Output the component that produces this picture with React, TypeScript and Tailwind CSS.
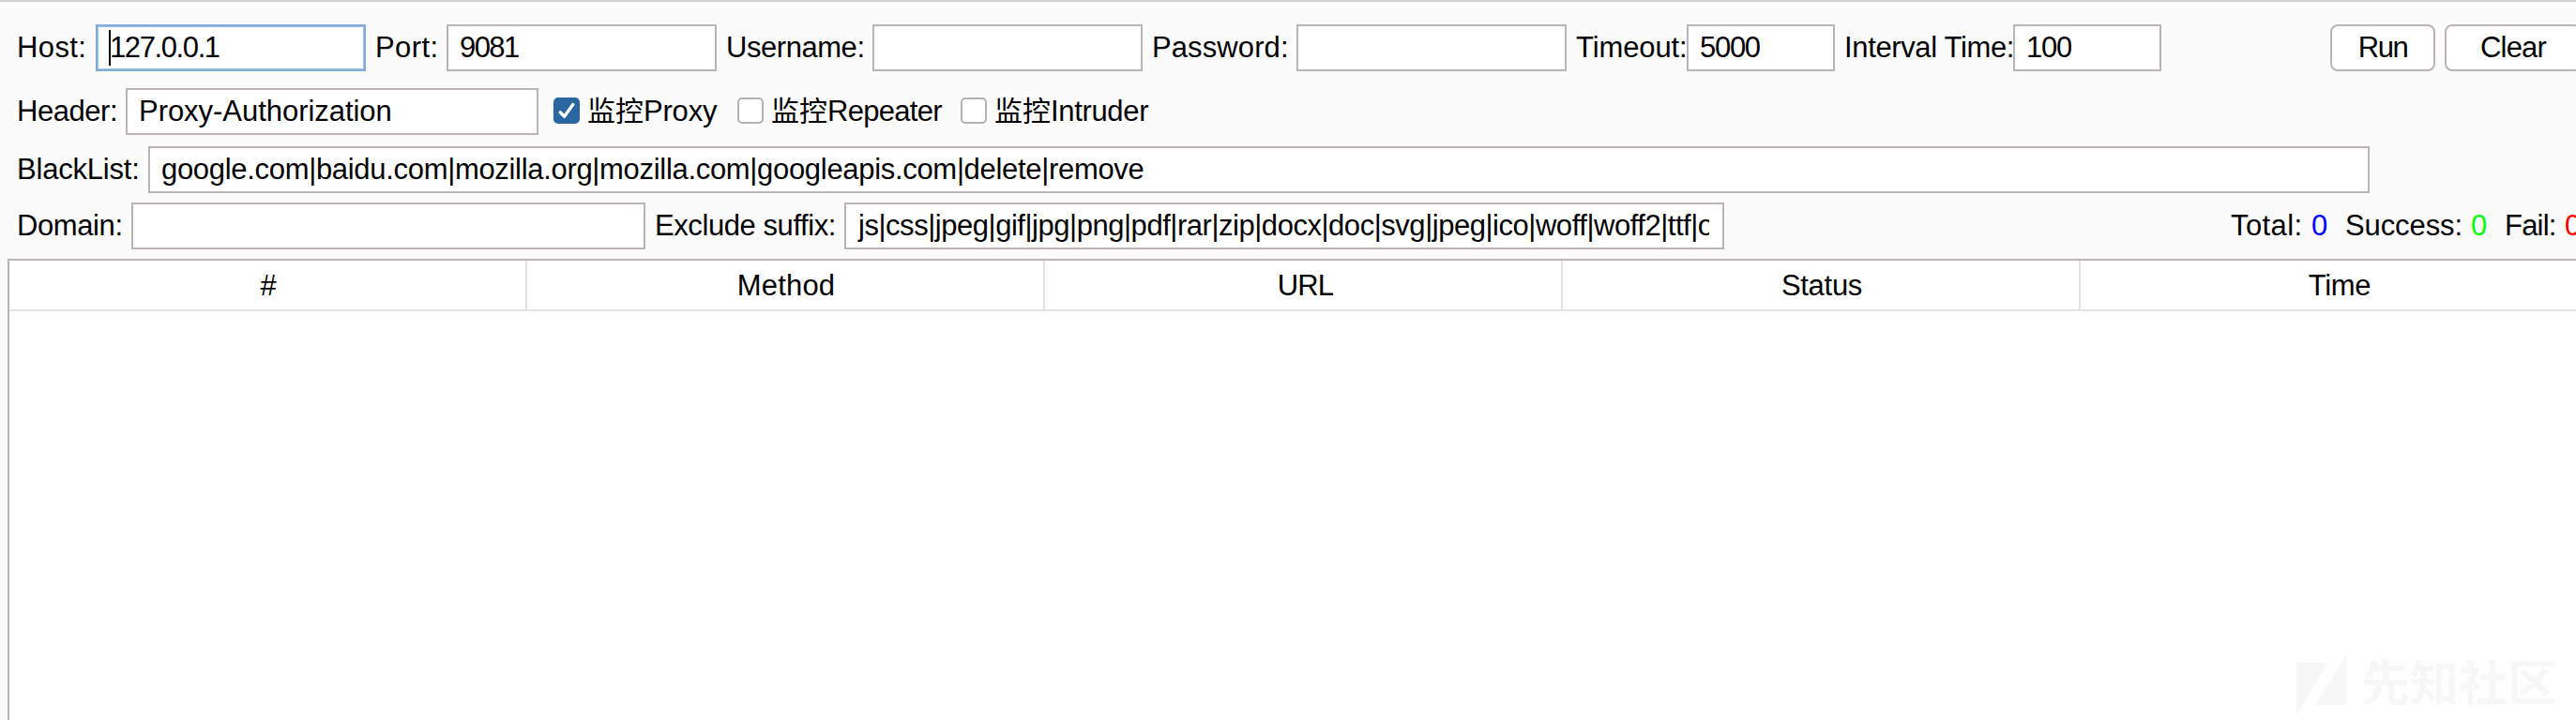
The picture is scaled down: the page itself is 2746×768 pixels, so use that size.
import React, { ReactNode } from "react";

function Label({ w, children }: { w: string; children: ReactNode }) {
  return <div className={`shrink-0 whitespace-pre ${w}`}>{children}</div>;
}

function Field({ w, ls = "", value = "", focused = false }: { w: string; ls?: string; value?: string; focused?: boolean }) {
  return (
    <div
      className={`relative flex h-[50px] shrink-0 items-center border-2 bg-white pl-[12px] pr-[14px] ${w} ${
        focused ? "border-[#85acd8] shadow-[inset_0_0_0_1px_#97c3f3]" : "border-[#bab4b6]"
      }`}
    >
      {focused && <span className="absolute left-[12px] top-[4px] h-[38px] w-[2px] bg-black" />}
      <div className={`min-w-0 overflow-hidden whitespace-pre ${ls}`}>{value}</div>
    </div>
  );
}

function Check({ checked = false, w, ls = "", children }: { checked?: boolean; w: string; ls?: string; children: ReactNode }) {
  return (
    <div className={`flex shrink-0 items-center gap-[8px] ${w}`}>
      <div
        className={`mb-[2px] h-[28px] w-[28px] shrink-0 rounded-[5px] ${
          checked ? "bg-[#2a67a0]" : "border-2 border-[#b2b2b2] bg-white"
        }`}
      >
        {checked && (
          <svg viewBox="0 0 28 28" className="h-[28px] w-[28px]">
            <path d="M7.2 15.8 L11.6 20.2 L20.8 7.6" fill="none" stroke="white" strokeWidth="3.4" strokeLinecap="round" strokeLinejoin="round" />
          </svg>
        )}
      </div>
      <div className="whitespace-pre">
        <span className="text-[30px] leading-[0]">监控</span>
        <span className={ls}>{children}</span>
      </div>
    </div>
  );
}

const columns = [
  { name: "#", ls: "" },
  { name: "Method", ls: "tracking-[0.2px]" },
  { name: "URL", ls: "tracking-[-0.8px] pl-[3px]" },
  { name: "Status", ls: "tracking-[-0.28px]" },
  { name: "Time", ls: "tracking-[-0.27px]" },
];

export default function App() {
  return (
    <div className="relative flex h-[768px] w-[2746px] flex-col overflow-hidden border-t-2 border-[#cdd1cf] bg-[#fbfbfb] font-['Liberation_Sans','Noto_Sans_CJK_SC',sans-serif] text-[31px] leading-[36px] text-black">
      <div className="mt-[24px] flex h-[50px] shrink-0 items-center pl-[18px]">
        <Label w="w-[84px] tracking-[0.4px]">Host:</Label>
        <Field w="w-[288px]" ls="tracking-[-1.4px] pl-px" value="127.0.0.1" focused />
        <Label w="w-[86px] pl-[10px] tracking-[0.4px]">Port:</Label>
        <Field w="w-[288px]" ls="tracking-[-1.6px]" value="9081" />
        <Label w="w-[166px] pl-[10px] tracking-[-0.45px]">Username:</Label>
        <Field w="w-[288px]" />
        <Label w="w-[164px] pl-[10px] tracking-[0.1px]">Password:</Label>
        <Field w="w-[288px]" />
        <Label w="w-[128px] pl-[10px] tracking-[-0.12px]">Timeout:</Label>
        <Field w="w-[158px]" ls="tracking-[-1.3px]" value="5000" />
        <Label w="w-[190px] pl-[10px] tracking-[-0.36px]">Interval Time:</Label>
        <Field w="w-[158px]" ls="tracking-[-1.3px]" value="100" />
        <button className="ml-[180px] h-[50px] w-[112px] shrink-0 rounded-[8px] border-2 border-[#bab4b6] bg-white tracking-[-1.5px]">Run</button>
        <button className="ml-[10px] h-[50px] w-[146px] shrink-0 rounded-[8px] border-2 border-[#bab4b6] bg-white tracking-[-0.8px]">Clear</button>
      </div>
      <div className="mt-[18px] flex h-[50px] shrink-0 items-center pl-[18px]">
        <Label w="w-[116px] tracking-[-0.45px]">Header:</Label>
        <Field w="w-[440px]" ls="tracking-[-0.04px]" value="Proxy-Authorization" />
        <div className="flex items-center pl-[16px]">
          <Check w="w-[196px]" ls="tracking-[-0.2px]" checked>Proxy</Check>
          <Check w="w-[238px]" ls="tracking-[-0.7px]">Repeater</Check>
          <Check w="w-[240px]" ls="tracking-[-0.34px]">Intruder</Check>
        </div>
      </div>
      <div className="mt-[12px] flex h-[50px] shrink-0 items-center pl-[18px]">
        <Label w="w-[140px] tracking-[-0.2px]">BlackList:</Label>
        <Field w="w-[2368px]" ls="tracking-[-0.31px]" value="google.com|baidu.com|mozilla.org|mozilla.com|googleapis.com|delete|remove" />
      </div>
      <div className="mt-[10px] flex h-[50px] shrink-0 items-center pl-[18px]">
        <Label w="w-[122px] tracking-[-0.4px]">Domain:</Label>
        <Field w="w-[548px]" />
        <Label w="w-[212px] pl-[10px] tracking-[-0.42px]">Exclude suffix:</Label>
        <Field w="w-[938px]" ls="tracking-[-0.46px] pl-px" value="js|css|jpeg|gif|jpg|png|pdf|rar|zip|docx|doc|svg|jpeg|ico|woff|woff2|ttf|otf" />
        <Label w="ml-[540px] w-[86px] tracking-[0.4px]">Total:</Label>
        <Label w="w-[36px] text-[#0000ff]">0</Label>
        <Label w="w-[134px] tracking-[-0.1px]">Success:</Label>
        <Label w="w-[36px] text-[#00ff00]">0</Label>
        <Label w="w-[64px] tracking-[-0.8px]">Fail:</Label>
        <Label w="w-[36px] text-[#ff0000]">0</Label>
      </div>
      <div className="ml-[8px] mt-[10px] flex w-[2766px] grow flex-col border-l-2 border-t-2 border-[#bab4b6] bg-[#fefefe]">
        <div className="flex h-[54px] shrink-0 border-b-2 border-[#e3e3e3] bg-white">
          {columns.map((c) => (
            <div key={c.name} className="flex w-[552px] shrink-0 items-center justify-center border-r-2 border-[#e3e3e3] pl-[2px] pt-[2px]">
              <span className={c.ls}>{c.name}</span>
            </div>
          ))}
        </div>
      </div>
      <div className="absolute left-[2448px] top-[694px] flex text-[#f7f7f7]">
        <svg viewBox="0 0 54 68" className="h-[68px] w-[54px]" fill="#f7f7f7">
          <path d="M0 11 H33 L0 67 Z" />
          <path d="M54 1 V56 H20 Z" />
        </svg>
        <span className="ml-[15px] mt-[6px] text-[52px] font-bold leading-[56px]">先知社区</span>
      </div>
    </div>
  );
}
